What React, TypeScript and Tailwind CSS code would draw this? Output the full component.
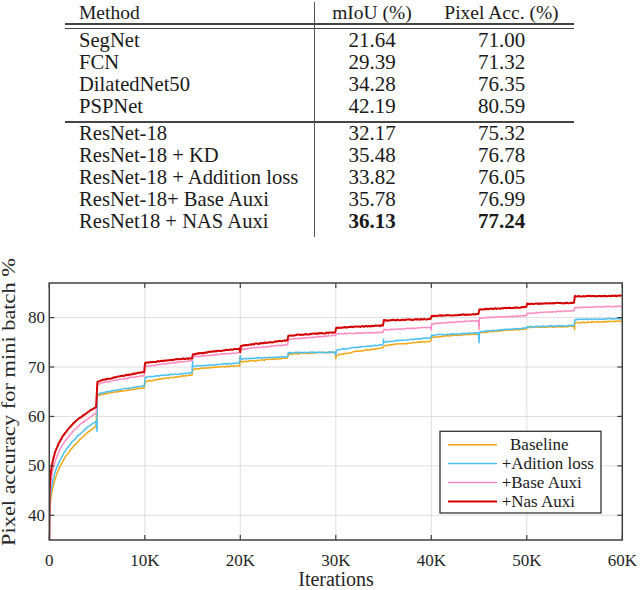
import React from "react";

type Seg = [number, number, number?];
type Curve = { name: string; color: string; width: number; exp: number; seed: number; segs: Seg[] };

const rows1 = [
  { name: "SegNet", miou: "21.64", acc: "71.00" },
  { name: "FCN", miou: "29.39", acc: "71.32" },
  { name: "DilatedNet50", miou: "34.28", acc: "76.35" },
  { name: "PSPNet", miou: "42.19", acc: "80.59" },
];

const rows2 = [
  { name: "ResNet-18", miou: "32.17", acc: "75.32" },
  { name: "ResNet-18 + KD", miou: "35.48", acc: "76.78" },
  { name: "ResNet-18 + Addition loss", miou: "33.82", acc: "76.05" },
  { name: "ResNet-18+ Base Auxi", miou: "35.78", acc: "76.99" },
  { name: "ResNet18 + NAS Auxi", miou: "36.13", acc: "77.24", bold: true },
];

// segments of 5K iterations: [start, end, spike at start]
const curves: Curve[] = [
  {
    name: "Baseline",
    color: "#f0a818",
    width: 1.5,
    exp: 0.3,
    seed: 1,
    segs: [
      [35, 58.2],
      [64.2, 65.8],
      [67.0, 68.4],
      [69.5, 70.3],
      [71.0, 71.8, 72.2],
      [72.6, 73.0],
      [72.3, 73.9, 71.7],
      [74.3, 75.2],
      [76.0, 76.7],
      [76.9, 77.7],
      [78.0, 78.2],
      [78.9, 79.3, 77.6],
    ],
  },
  {
    name: "+Adition loss",
    color: "#4cc0f0",
    width: 1.5,
    exp: 0.27,
    seed: 2,
    segs: [
      [35, 59.2],
      [64.5, 66.2, 57.0],
      [67.9, 68.8],
      [70.1, 70.8, 71.2],
      [71.6, 72.1, 72.3],
      [72.9, 73.0],
      [73.4, 74.5, 72.4],
      [75.0, 75.9, 75.6],
      [76.4, 76.9],
      [77.1, 77.9, 74.9],
      [78.1, 78.4],
      [79.6, 79.8],
    ],
  },
  {
    name: "+Base Auxi",
    color: "#ff8cc0",
    width: 1.5,
    exp: 0.23,
    seed: 3,
    segs: [
      [35, 60.8],
      [66.5, 68.3],
      [70.0, 71.3],
      [72.0, 72.9],
      [73.5, 74.5],
      [75.5, 76.4],
      [76.7, 77.0],
      [77.5, 78.0],
      [78.7, 79.4, 77.5],
      [79.9, 80.4, 77.6],
      [80.8, 81.4],
      [82.0, 82.3],
    ],
  },
  {
    name: "+Nas Auxi",
    color: "#d40000",
    width: 2,
    exp: 0.2,
    seed: 4,
    segs: [
      [35, 62.0],
      [67.0, 69.0],
      [70.8, 71.8, 70.3],
      [72.5, 73.7],
      [74.2, 75.4, 73.0],
      [76.3, 77.0],
      [77.9, 78.4],
      [79.4, 79.7],
      [80.3, 80.7],
      [81.6, 82.1],
      [82.75, 83.0],
      [84.3, 84.4],
    ],
  },
];

const X0 = 49.3;
const X1 = 622.3;
const YB = 292;
const YT = 35;
const xs = (it: number) => X0 + (it / 60000) * (X1 - X0);
const ys = (v: number) => YB - ((v - 35) * (YB - YT)) / 52;

const noise = (it: number, seed: number) => {
  const s = Math.sin(it * 12.9898 + seed * 78.233) * 43758.5453;
  return s - Math.floor(s) - 0.5;
};

const buildPath = (c: Curve) => {
  const pts: [number, number][] = [];
  c.segs.forEach(([a, b, spike], k) => {
    const start = k * 5000;
    if (k > 0 && spike !== undefined) pts.push([start, spike]);
    let it = start + (k > 0 ? 40 : 0);
    while (it <= start + 4960) {
      const t = (it - start) / 5000;
      let v = k === 0 ? 35 + (b - 35) * Math.pow(t, c.exp) : a + (b - a) * Math.pow(t, 0.8);
      if (it > 300) v += noise(it, c.seed) * 0.18;
      pts.push([it, v]);
      it += k === 0 && it < 1000 ? 20 : 100;
    }
  });
  return pts.map(([i, v], n) => `${n ? "L" : "M"}${xs(i).toFixed(1)},${ys(v).toFixed(1)}`).join(" ");
};

const Row = ({ name, miou, acc, bold }: { name: string; miou: string; acc: string; bold?: boolean }) => (
  <div className="flex h-[22px] items-center text-[20.6px] leading-none">
    <div className="flex h-full w-[250px] items-center border-r-[1.5px] border-[#555] pl-[14px]">{name}</div>
    <div className={`w-[114px] text-center text-[21px] ${bold ? "font-bold" : ""}`}>{miou}</div>
    <div className={`w-[145px] text-center text-[21px] ${bold ? "font-bold" : ""}`}>{acc}</div>
  </div>
);

const Gap = ({ h }: { h: string }) => (
  <div className={`${h} w-[250px] border-r-[1.5px] border-[#555]`} />
);

const Chart = () => {
  const xticks = [0, 10000, 20000, 30000, 40000, 50000, 60000];
  const yticks = [40, 50, 60, 70, 80];
  const font = "'Liberation Serif', serif";
  return (
    <svg width={640} height={340} className="block">
      <defs>
        <clipPath id="plot">
          <rect x={X0} y={YT} width={X1 - X0} height={YB - YT} />
        </clipPath>
      </defs>
      {xticks.map((t) => (
        <line key={`gx${t}`} x1={xs(t)} x2={xs(t)} y1={YT} y2={YB} stroke="#dedede" strokeWidth={1} />
      ))}
      {yticks.map((t) => (
        <line key={`gy${t}`} x1={X0} x2={X1} y1={ys(t)} y2={ys(t)} stroke="#dedede" strokeWidth={1} />
      ))}
      <g clipPath="url(#plot)" fill="none" strokeLinejoin="round">
        {curves.map((c) => (
          <path key={c.name} d={buildPath(c)} stroke={c.color} strokeWidth={c.width} />
        ))}
      </g>
      <rect x={X0} y={YT} width={X1 - X0} height={YB - YT} fill="none" stroke="#404040" strokeWidth={1.5} />
      {xticks.map((t) => (
        <g key={`tx${t}`} stroke="#404040" strokeWidth={1.2}>
          <line x1={xs(t)} x2={xs(t)} y1={YB} y2={YB - 5} />
          <line x1={xs(t)} x2={xs(t)} y1={YT} y2={YT + 5} />
        </g>
      ))}
      {yticks.map((t) => (
        <g key={`ty${t}`} stroke="#404040" strokeWidth={1.2}>
          <line x1={X0} x2={X0 + 5} y1={ys(t)} y2={ys(t)} />
          <line x1={X1} x2={X1 - 5} y1={ys(t)} y2={ys(t)} />
        </g>
      ))}
      <g fontFamily={font} fontSize={17} fill="#262626">
        {xticks.map((t) => (
          <text key={`lx${t}`} x={xs(t)} y={317.5} textAnchor="middle">
            {t === 0 ? "0" : `${t / 1000}K`}
          </text>
        ))}
        {yticks.map((t) => (
          <text key={`ly${t}`} x={45} y={ys(t) + 5.5} textAnchor="end">
            {t}
          </text>
        ))}
        <text x={336} y={338} textAnchor="middle" fontSize={20}>
          Iterations
        </text>
        <text
          transform="translate(15,154) rotate(-90)"
          textAnchor="middle"
          fontSize={19}
          textLength={288}
          lengthAdjust="spacingAndGlyphs"
        >
          Pixel accuracy for mini batch %
        </text>
      </g>
      <rect x={440} y={183.3} width={161} height={81.7} fill="#fff" stroke="#333" strokeWidth={1.3} />
      {curves.map((c, i) => {
        const cy = 196.7 + i * 18.9;
        return (
          <g key={`lg${c.name}`}>
            <line x1={448} x2={497} y1={cy} y2={cy} stroke={c.color} strokeWidth={c.width} />
            <text x={i === 0 ? 510 : 501.7} y={cy + 5.5} fontFamily={font} fontSize={17} fill="#1a1a1a">
              {c.name}
            </text>
          </g>
        );
      })}
    </svg>
  );
};

const App = () => {
  return (
    <div className="h-[590px] w-[640px] overflow-hidden bg-white text-[#1a1a1a] [font-family:Liberation_Serif,serif]">
      <div className="ml-[65px] w-[509px] pt-[2px]">
        <div className="flex h-[21px] items-center text-[19.5px] leading-none">
          <div className="flex h-full w-[250px] items-center border-r-[1.5px] border-[#555] pl-[14px]">Method</div>
          <div className="w-[114px] text-center">mIoU (%)</div>
          <div className="w-[145px] text-center">Pixel Acc. (%)</div>
        </div>
        <div className="h-[1.5px] bg-[#444]" />
        <Gap h="h-[3px]" />
        <div className="h-[1.5px] bg-[#444]" />
        {rows1.map((r) => (
          <Row key={r.name} {...r} />
        ))}
        <Gap h="h-[4px]" />
        <div className="h-[1.5px] bg-[#444]" />
        {rows2.map((r) => (
          <Row key={r.name} {...r} />
        ))}
        <Gap h="h-[4px]" />
      </div>
      <div className="mt-[11.5px]">
        <Chart />
      </div>
    </div>
  );
};

export default App;
